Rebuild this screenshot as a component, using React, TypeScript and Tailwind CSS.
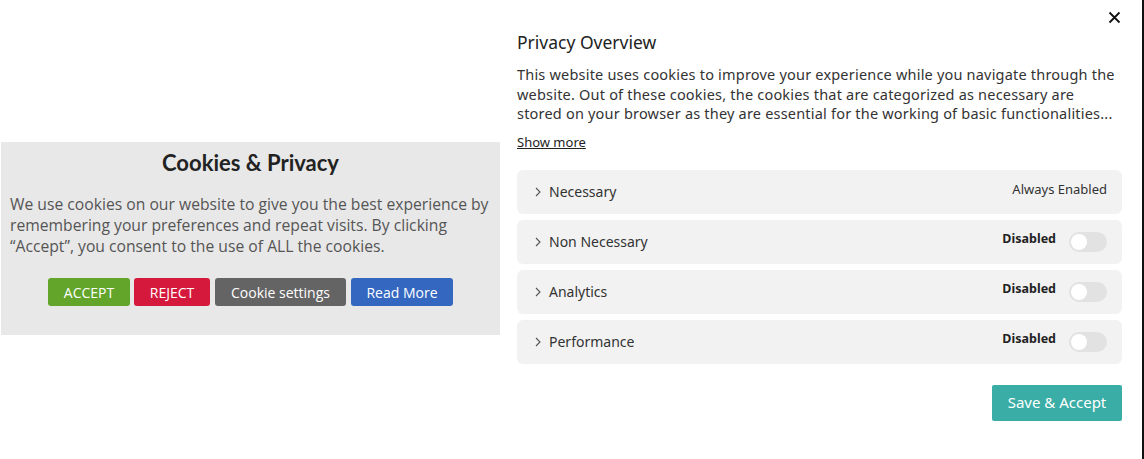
import React from "react";

const Chevron = () => (
  <svg width="8" height="12" viewBox="0 0 8 12" className="shrink-0">
    <path d="M2 2 L6 6 L2 10" fill="none" stroke="#555" strokeWidth="1.1" />
  </svg>
);

const Toggle = () => (
  <div className="w-[38px] h-[20px] rounded-full bg-[#e2e2e2] flex items-center pl-[2px]">
    <div className="w-[16px] h-[16px] rounded-full bg-white" />
  </div>
);

const Row = ({ label, always }: { label: string; always?: boolean }) => (
  <div className="h-[44px] rounded-[6px] bg-[#f2f2f2] flex items-center pl-[17px] pr-[15px]">
    <Chevron />
    <span className="ml-[7px] text-[14px] text-[#333]">{label}</span>
    <div className="ml-auto flex items-center">
      {always ? (
        <span className="text-[13px] text-[#333] -mt-[4px]">Always Enabled</span>
      ) : (
        <>
          <span className="text-[12.5px] font-bold text-[#222] -mt-[4px]">Disabled</span>
          <div className="ml-[13px]">
            <Toggle />
          </div>
        </>
      )}
    </div>
  </div>
);

export default function App() {
  return (
    <div className="w-[1144px] h-[459px] bg-white flex overflow-hidden">
      <div className="w-[500px] shrink-0 pl-[1px] pt-[142px]">
        <div
          className="w-[499px] h-[193px] bg-[#e8e8e8] flex flex-col items-center pt-[6px]"
          style={{ fontFamily: "'Open Sans', sans-serif" }}
        >
          <h2
            className="text-[22px] leading-[30px] font-bold text-[#222]"
            style={{ fontFamily: "Lato, sans-serif" }}
          >
            Cookies &amp; Privacy
          </h2>
          <p className="self-stretch pl-[9px] pr-[2px] mt-[16px] text-[15.7px] leading-[21px] text-[#555]">
            We use cookies on our website to give you the best experience by remembering your
            preferences and repeat visits. By clicking “Accept”, you consent to the use of ALL the
            cookies.
          </p>
          <div className="flex gap-[4px] mt-[21px] text-[14px] font-medium text-white">
            <button className="w-[82px] h-[28px] rounded-[3px] bg-[#62a52a]">ACCEPT</button>
            <button className="w-[76px] h-[28px] rounded-[3px] bg-[#d5193c]">REJECT</button>
            <button className="w-[131px] h-[28px] rounded-[3px] bg-[#646464] ml-[1px]">Cookie settings</button>
            <button className="w-[102px] h-[28px] rounded-[3px] bg-[#3467c0] ml-[1px]">Read More</button>
          </div>
        </div>
      </div>
      <div
        className="w-[605px] ml-[17px] shrink-0 flex flex-col"
        style={{ fontFamily: "'Noto Sans', sans-serif" }}
      >
        <div className="flex justify-end pt-[11px] pr-[1px]">
          <svg width="13" height="13" viewBox="0 0 13 13">
            <path d="M1.5 1.5 L11.5 11.5 M11.5 1.5 L1.5 11.5" stroke="#111" strokeWidth="1.8" />
          </svg>
        </div>
        <h3 className="mt-[5px] text-[17.5px] leading-[26px] text-[#222]">Privacy Overview</h3>
        <p className="mt-[10px] text-[14.5px] leading-[19.5px] text-[#333] tracking-[0.2px]">
          This website uses cookies to improve your experience while you navigate through the
          website. Out of these cookies, the cookies that are categorized as necessary are stored on
          your browser as they are essential for the working of basic functionalities...
        </p>
        <a className="mt-[10px] text-[13px] leading-[17px] text-[#222] underline self-start">Show more</a>
        <div className="mt-[19px] flex flex-col gap-[6px]">
          <Row label="Necessary" always />
          <Row label="Non Necessary" />
          <Row label="Analytics" />
          <Row label="Performance" />
        </div>
        <div className="flex justify-end mt-[21px]">
          <button className="w-[130px] h-[36px] rounded-[2px] bg-[#3aada6] text-white text-[15px]">
            Save &amp; Accept
          </button>
        </div>
      </div>
      <div className="flex-1" />
      <div className="w-[2px] bg-[#111] shrink-0" />
    </div>
  );
}
